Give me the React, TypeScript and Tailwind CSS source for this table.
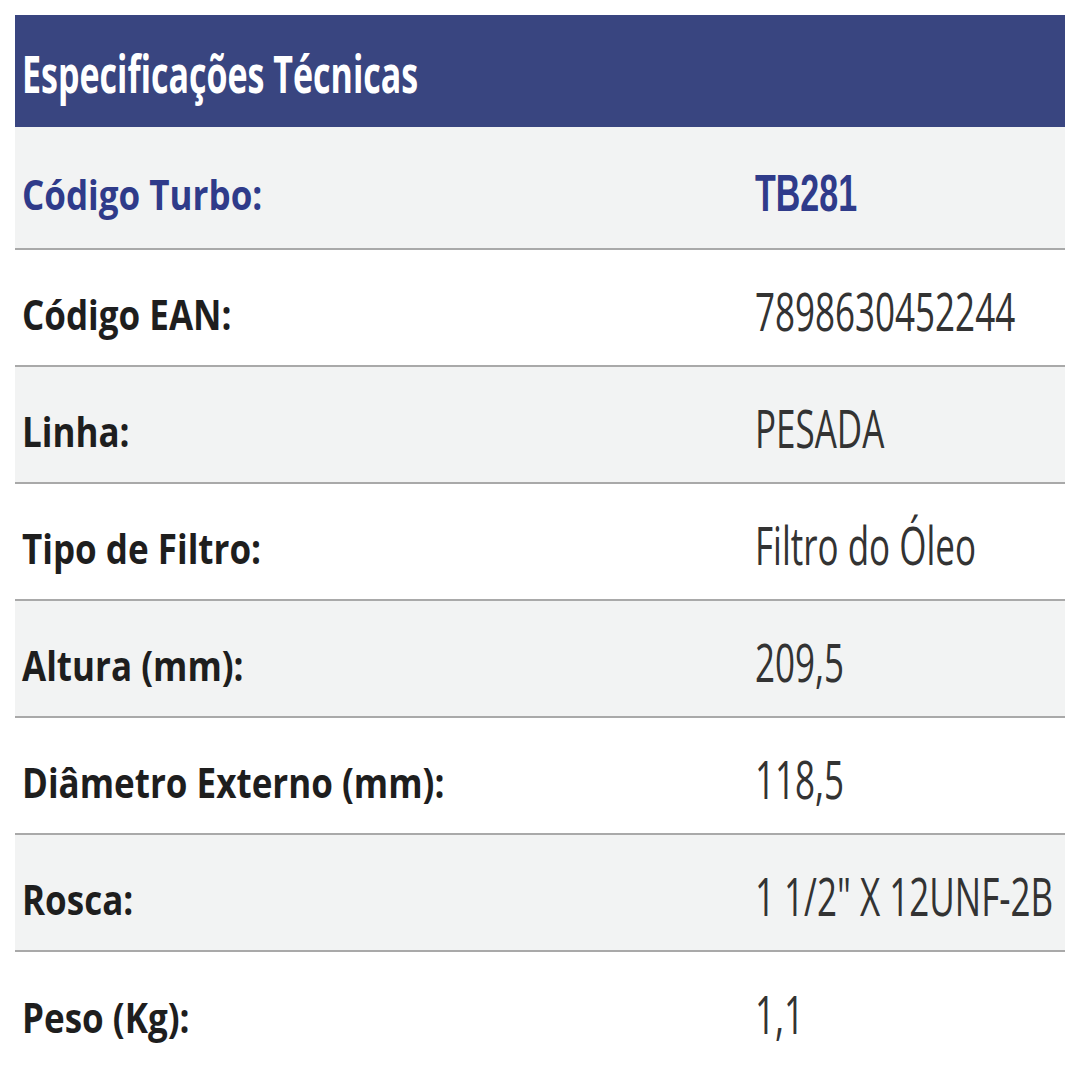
const specs = [
  { label: "Código Turbo:", value: "TB281", highlight: true },
  { label: "Código EAN:", value: "7898630452244" },
  { label: "Linha:", value: "PESADA" },
  { label: "Tipo de Filtro:", value: "Filtro do Óleo" },
  { label: "Altura (mm):", value: "209,5" },
  { label: "Diâmetro Externo (mm):", value: "118,5" },
  { label: "Rosca:", value: '1 1/2" X 12UNF-2B' },
  { label: "Peso (Kg):", value: "1,1" },
];

export default function App() {
  return (
    <div className="min-h-screen w-full bg-white px-[15px] pt-[15px] font-['Open_Sans',sans-serif]">
      <div className="w-full overflow-hidden">
        <div className="flex h-[112px] items-center bg-[#394580] px-[7px]">
          <span className="inline-block origin-center translate-y-[2px] scale-y-[1.55] text-[34px] leading-none font-bold text-white">
            Especificações Técnicas
          </span>
        </div>
        {specs.map((row, i) => (
          <div
            key={row.label}
            className={`flex items-center ${i === 0 ? "h-[123px]" : "h-[117px]"} ${
              i % 2 === 0 ? "bg-[#f2f3f3]" : "bg-white"
            } ${i < specs.length - 1 ? "border-b-2 border-[#a9a9a9]" : ""}`}
          >
            <div className="w-[740px] shrink-0 pl-[7px]">
              <span
                className={`inline-block origin-center translate-y-[7px] scale-y-[1.2] text-[35px] leading-none font-bold ${
                  row.highlight ? "text-[#2f3b8a]" : "text-[#1e1e1e]"
                }`}
              >
                {row.label}
              </span>
            </div>
            <div className="whitespace-nowrap">
              {row.highlight ? (
                <span className="inline-block origin-center translate-y-[5px] scale-y-[1.55] font-['Liberation_Sans',sans-serif] text-[34px] leading-none font-bold text-[#2f3b8a]">
                  {row.value}
                </span>
              ) : (
                <span className="inline-block origin-center translate-y-[4px] scale-y-[1.5] text-[35px] leading-none text-[#333333]">
                  {row.value}
                </span>
              )}
            </div>
          </div>
        ))}
      </div>
    </div>
  );
}
